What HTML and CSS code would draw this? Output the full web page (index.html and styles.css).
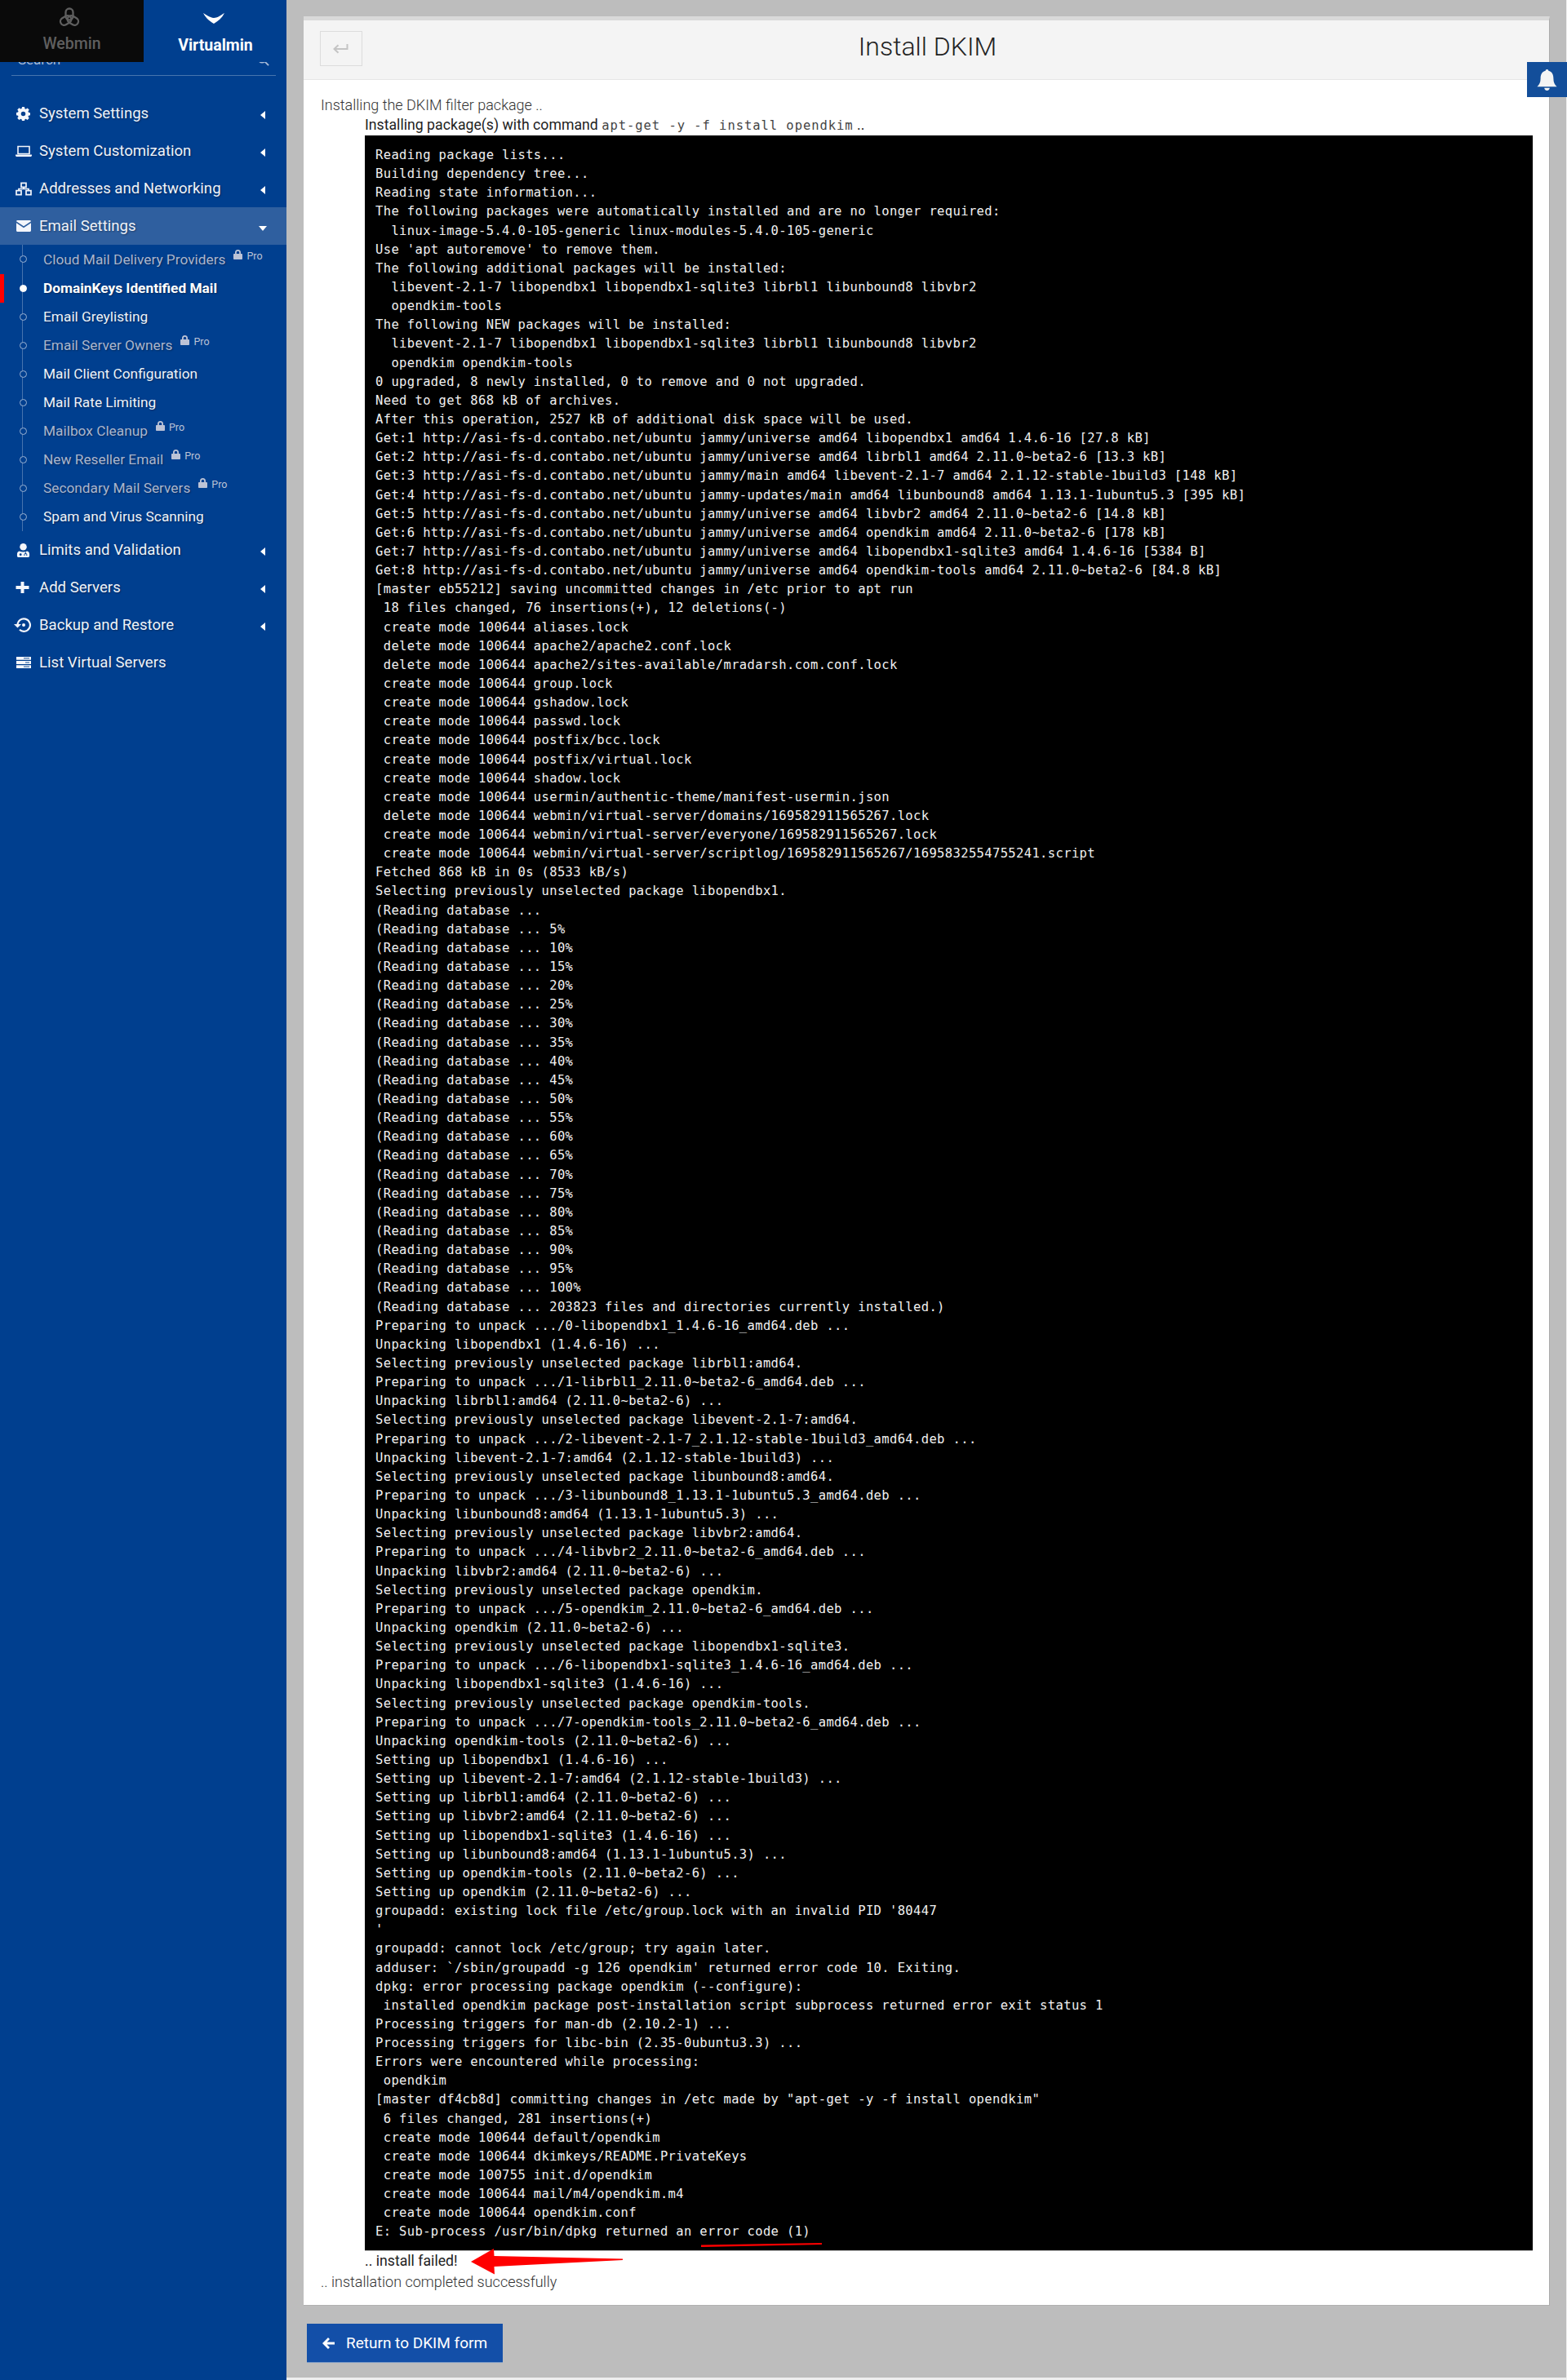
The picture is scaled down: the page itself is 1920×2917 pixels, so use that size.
FILE: index.html
```html
<!DOCTYPE html>
<html lang="en">
<head>
<meta charset="utf-8">
<title>Install DKIM</title>
<link rel="stylesheet" href="styles.css">
</head>
<body>
<div class="page">
<aside class="sidebar">
  <div class="tabs">
    <div class="tab tab-webmin">
      <svg class="tab-icon" viewBox="0 0 26 24"><g fill="none" stroke="currentColor" stroke-width="2.300"><rect x="8.500" y="1.500" width="9" height="14" rx="4.500" transform="rotate(0 13 13.500)"/><rect x="8.500" y="1.500" width="9" height="14" rx="4.500" transform="rotate(120 13 13.500)"/><rect x="8.500" y="1.500" width="9" height="14" rx="4.500" transform="rotate(240 13 13.500)"/></g></svg>
      <span>Webmin</span>
    </div>
    <div class="tab tab-virtualmin">
      <svg class="tab-icon" viewBox="0 0 26 13"><path d="M0 0C5 3 9 6 13 6S21 3 26 0C23 6 18 10 13 13 8 10 3 6 0 0z" fill="currentColor"/></svg>
      <span>Virtualmin</span>
    </div>
  </div>
  <div class="search"><span>Search</span>
    <svg class="search-icon" viewBox="0 0 16 16"><circle cx="6.500" cy="6.500" r="5" fill="none" stroke="currentColor" stroke-width="1.500"/><path d="M10 10l5 5" stroke="currentColor" stroke-width="2"/></svg>
  </div>
  <nav class="menu">
    <div class="row"><svg class="ico" viewBox="0 0 16 16"><path d="M6.600 0h2.800l.4 2.100 1.200.5 1.800-1.200 2 2-1.200 1.800.5 1.200 2 .4v2.800l-2 .4-.5 1.200 1.200 1.800-2 2-1.800-1.200-1.200.5-.4 2H6.600l-.4-2-1.200-.5-1.800 1.200-2-2 1.200-1.800-.5-1.200-2-.4V6.600l2-.4.500-1.200L1.200 3.200l2-2L5 2.400l1.200-.5zM8 5.400a2.600 2.600 0 1 0 0 5.200 2.600 2.600 0 0 0 0-5.200z" fill="currentColor" fill-rule="evenodd"/></svg><span class="label">System Settings</span><i class="caret-left"></i></div>
    <div class="row"><svg class="ico ico-wide" viewBox="0 0 20 14"><path d="M3 1h14v9H3z" fill="none" stroke="currentColor" stroke-width="1.600"/><path d="M0 11h20v1.500l-1 1H1l-1-1z" fill="currentColor"/></svg><span class="label">System Customization</span><i class="caret-left"></i></div>
    <div class="row"><svg class="ico ico-wide" viewBox="0 0 20 16"><path d="M7 .8h6v5H7zM1 10.200h6v5H1zM13 10.200h6v5h-6z" fill="none" stroke="currentColor" stroke-width="1.700"/><path d="M10 5.500v2.500M4 10.500V8h12v2.500" fill="none" stroke="currentColor" stroke-width="1.700"/></svg><span class="label">Addresses and Networking</span><i class="caret-left"></i></div>
    <div class="row row-open"><svg class="ico ico-mail" viewBox="0 0 18 14"><path d="M1.500 0h15c.8 0 1.500.6 1.500 1.300L9 7.300 0 1.300C0 .6.700 0 1.500 0zM0 3.200l9 6 9-6v9.300c0 .8-.7 1.500-1.500 1.500h-15C.7 14 0 13.300 0 12.500z" fill="currentColor"/></svg><span class="label">Email Settings</span><i class="caret-down"></i></div>
    <ul class="sub">
      <li class="item dim"><span>Cloud Mail Delivery Providers</span><span class="pro"><svg class="lock" viewBox="0 0 11 12"><path d="M2 5V3.500a3.500 3.500 0 0 1 7 0V5h1.200c.4 0 .8.400.8.800v5.400c0 .4-.4.800-.8.800H.8c-.4 0-.8-.4-.8-.8V5.800C0 5.400.4 5 .8 5zm1.800 0h3.400V3.500a1.700 1.700 0 0 0-3.400 0z" fill="currentColor"/></svg>Pro</span></li>
      <li class="item active"><span>DomainKeys Identified Mail</span></li>
      <li class="item"><span>Email Greylisting</span></li>
      <li class="item dim"><span>Email Server Owners</span><span class="pro"><svg class="lock" viewBox="0 0 11 12"><path d="M2 5V3.500a3.500 3.500 0 0 1 7 0V5h1.200c.4 0 .8.400.8.800v5.400c0 .4-.4.800-.8.800H.8c-.4 0-.8-.4-.8-.8V5.800C0 5.400.4 5 .8 5zm1.800 0h3.400V3.500a1.700 1.700 0 0 0-3.400 0z" fill="currentColor"/></svg>Pro</span></li>
      <li class="item"><span>Mail Client Configuration</span></li>
      <li class="item"><span>Mail Rate Limiting</span></li>
      <li class="item dim"><span>Mailbox Cleanup</span><span class="pro"><svg class="lock" viewBox="0 0 11 12"><path d="M2 5V3.500a3.500 3.500 0 0 1 7 0V5h1.200c.4 0 .8.400.8.800v5.400c0 .4-.4.800-.8.800H.8c-.4 0-.8-.4-.8-.8V5.800C0 5.400.4 5 .8 5zm1.800 0h3.400V3.500a1.700 1.700 0 0 0-3.400 0z" fill="currentColor"/></svg>Pro</span></li>
      <li class="item dim"><span>New Reseller Email</span><span class="pro"><svg class="lock" viewBox="0 0 11 12"><path d="M2 5V3.500a3.500 3.500 0 0 1 7 0V5h1.200c.4 0 .8.400.8.800v5.400c0 .4-.4.800-.8.800H.8c-.4 0-.8-.4-.8-.8V5.800C0 5.400.4 5 .8 5zm1.800 0h3.400V3.500a1.700 1.700 0 0 0-3.400 0z" fill="currentColor"/></svg>Pro</span></li>
      <li class="item dim"><span>Secondary Mail Servers</span><span class="pro"><svg class="lock" viewBox="0 0 11 12"><path d="M2 5V3.500a3.500 3.500 0 0 1 7 0V5h1.200c.4 0 .8.400.8.800v5.400c0 .4-.4.800-.8.800H.8c-.4 0-.8-.4-.8-.8V5.800C0 5.400.4 5 .8 5zm1.800 0h3.400V3.500a1.700 1.700 0 0 0-3.400 0z" fill="currentColor"/></svg>Pro</span></li>
      <li class="item"><span>Spam and Virus Scanning</span></li>
    </ul>
    <div class="row"><svg class="ico" viewBox="0 0 16 18"><circle cx="8" cy="4.500" r="4.500" fill="currentColor"/><path d="M3 10c3 1.500 7 1.500 10 0 2 .5 3 2 3 4v2.500c0 .8-.7 1.500-1.500 1.500h-13C.7 18 0 17.300 0 16.500V14c0-2 1-3.500 3-4z" fill="currentColor"/><circle cx="4.500" cy="14.500" r="1.500" fill="#003f8f"/><path d="M11 11v3M9.500 16v-1.500a1.500 1.500 0 0 1 3 0V16" stroke="#003f8f" fill="none"/></svg><span class="label">Limits and Validation</span><i class="caret-left"></i></div>
    <div class="row"><svg class="ico ico-plus" viewBox="0 0 16 14"><path d="M6 0h4v5h6v4h-6v5H6V9H0V5h6z" fill="currentColor"/></svg><span class="label">Add Servers</span><i class="caret-left"></i></div>
    <div class="row"><svg class="ico ico-back" viewBox="0 0 21 18"><path d="M4.500 9a7.700 7.700 0 1 1 2.500 5.800" fill="none" stroke="currentColor" stroke-width="2.200"/><path d="M0 8h9l-4.500 4.500z" fill="currentColor"/><circle cx="12" cy="9" r="2" fill="currentColor"/></svg><span class="label">Backup and Restore</span><i class="caret-left"></i></div>
    <div class="row"><svg class="ico ico-mail" viewBox="0 0 18 14"><path d="M0 0h18v3.700H0zM0 5.100h18v3.800H0zM0 10.300h18V14H0z" fill="currentColor"/><path d="M9 1.800h7M11 7h5M9 12.100h7" stroke="#003f8f" stroke-width=".9"/></svg><span class="label">List Virtual Servers</span></div>
  </nav>
  <i class="marker"></i>
</aside>
<main class="main">
  <section class="card">
    <header class="card-head">
      <button class="back" type="button"><svg viewBox="0 0 20 12"><path d="M18.500 0v6H3M7.500 1.200L2.500 6l5 4.800" fill="none" stroke="currentColor" stroke-width="2"/></svg></button>
      <h1>Install DKIM</h1>
      <span class="back-spacer"></span>
    </header>
    <div class="card-body">
      <p class="line">Installing the DKIM filter package ..</p>
      <div class="indent">
        <p class="line line-strong">Installing package(s) with command <code>apt-get -y -f install opendkim</code> ..</p>
<pre class="term">Reading package lists...
Building dependency tree...
Reading state information...
The following packages were automatically installed and are no longer required:
  linux-image-5.4.0-105-generic linux-modules-5.4.0-105-generic
Use 'apt autoremove' to remove them.
The following additional packages will be installed:
  libevent-2.1-7 libopendbx1 libopendbx1-sqlite3 librbl1 libunbound8 libvbr2
  opendkim-tools
The following NEW packages will be installed:
  libevent-2.1-7 libopendbx1 libopendbx1-sqlite3 librbl1 libunbound8 libvbr2
  opendkim opendkim-tools
0 upgraded, 8 newly installed, 0 to remove and 0 not upgraded.
Need to get 868 kB of archives.
After this operation, 2527 kB of additional disk space will be used.
Get:1 http://asi-fs-d.contabo.net/ubuntu jammy/universe amd64 libopendbx1 amd64 1.4.6-16 [27.8 kB]
Get:2 http://asi-fs-d.contabo.net/ubuntu jammy/universe amd64 librbl1 amd64 2.11.0~beta2-6 [13.3 kB]
Get:3 http://asi-fs-d.contabo.net/ubuntu jammy/main amd64 libevent-2.1-7 amd64 2.1.12-stable-1build3 [148 kB]
Get:4 http://asi-fs-d.contabo.net/ubuntu jammy-updates/main amd64 libunbound8 amd64 1.13.1-1ubuntu5.3 [395 kB]
Get:5 http://asi-fs-d.contabo.net/ubuntu jammy/universe amd64 libvbr2 amd64 2.11.0~beta2-6 [14.8 kB]
Get:6 http://asi-fs-d.contabo.net/ubuntu jammy/universe amd64 opendkim amd64 2.11.0~beta2-6 [178 kB]
Get:7 http://asi-fs-d.contabo.net/ubuntu jammy/universe amd64 libopendbx1-sqlite3 amd64 1.4.6-16 [5384 B]
Get:8 http://asi-fs-d.contabo.net/ubuntu jammy/universe amd64 opendkim-tools amd64 2.11.0~beta2-6 [84.8 kB]
[master eb55212] saving uncommitted changes in /etc prior to apt run
 18 files changed, 76 insertions(+), 12 deletions(-)
 create mode 100644 aliases.lock
 delete mode 100644 apache2/apache2.conf.lock
 delete mode 100644 apache2/sites-available/mradarsh.com.conf.lock
 create mode 100644 group.lock
 create mode 100644 gshadow.lock
 create mode 100644 passwd.lock
 create mode 100644 postfix/bcc.lock
 create mode 100644 postfix/virtual.lock
 create mode 100644 shadow.lock
 create mode 100644 usermin/authentic-theme/manifest-usermin.json
 delete mode 100644 webmin/virtual-server/domains/169582911565267.lock
 create mode 100644 webmin/virtual-server/everyone/169582911565267.lock
 create mode 100644 webmin/virtual-server/scriptlog/169582911565267/1695832554755241.script
Fetched 868 kB in 0s (8533 kB/s)
Selecting previously unselected package libopendbx1.
(Reading database ...
(Reading database ... 5%
(Reading database ... 10%
(Reading database ... 15%
(Reading database ... 20%
(Reading database ... 25%
(Reading database ... 30%
(Reading database ... 35%
(Reading database ... 40%
(Reading database ... 45%
(Reading database ... 50%
(Reading database ... 55%
(Reading database ... 60%
(Reading database ... 65%
(Reading database ... 70%
(Reading database ... 75%
(Reading database ... 80%
(Reading database ... 85%
(Reading database ... 90%
(Reading database ... 95%
(Reading database ... 100%
(Reading database ... 203823 files and directories currently installed.)
Preparing to unpack .../0-libopendbx1_1.4.6-16_amd64.deb ...
Unpacking libopendbx1 (1.4.6-16) ...
Selecting previously unselected package librbl1:amd64.
Preparing to unpack .../1-librbl1_2.11.0~beta2-6_amd64.deb ...
Unpacking librbl1:amd64 (2.11.0~beta2-6) ...
Selecting previously unselected package libevent-2.1-7:amd64.
Preparing to unpack .../2-libevent-2.1-7_2.1.12-stable-1build3_amd64.deb ...
Unpacking libevent-2.1-7:amd64 (2.1.12-stable-1build3) ...
Selecting previously unselected package libunbound8:amd64.
Preparing to unpack .../3-libunbound8_1.13.1-1ubuntu5.3_amd64.deb ...
Unpacking libunbound8:amd64 (1.13.1-1ubuntu5.3) ...
Selecting previously unselected package libvbr2:amd64.
Preparing to unpack .../4-libvbr2_2.11.0~beta2-6_amd64.deb ...
Unpacking libvbr2:amd64 (2.11.0~beta2-6) ...
Selecting previously unselected package opendkim.
Preparing to unpack .../5-opendkim_2.11.0~beta2-6_amd64.deb ...
Unpacking opendkim (2.11.0~beta2-6) ...
Selecting previously unselected package libopendbx1-sqlite3.
Preparing to unpack .../6-libopendbx1-sqlite3_1.4.6-16_amd64.deb ...
Unpacking libopendbx1-sqlite3 (1.4.6-16) ...
Selecting previously unselected package opendkim-tools.
Preparing to unpack .../7-opendkim-tools_2.11.0~beta2-6_amd64.deb ...
Unpacking opendkim-tools (2.11.0~beta2-6) ...
Setting up libopendbx1 (1.4.6-16) ...
Setting up libevent-2.1-7:amd64 (2.1.12-stable-1build3) ...
Setting up librbl1:amd64 (2.11.0~beta2-6) ...
Setting up libvbr2:amd64 (2.11.0~beta2-6) ...
Setting up libopendbx1-sqlite3 (1.4.6-16) ...
Setting up libunbound8:amd64 (1.13.1-1ubuntu5.3) ...
Setting up opendkim-tools (2.11.0~beta2-6) ...
Setting up opendkim (2.11.0~beta2-6) ...
groupadd: existing lock file /etc/group.lock with an invalid PID '80447
'
groupadd: cannot lock /etc/group; try again later.
adduser: `/sbin/groupadd -g 126 opendkim' returned error code 10. Exiting.
dpkg: error processing package opendkim (--configure):
 installed opendkim package post-installation script subprocess returned error exit status 1
Processing triggers for man-db (2.10.2-1) ...
Processing triggers for libc-bin (2.35-0ubuntu3.3) ...
Errors were encountered while processing:
 opendkim
[master df4cb8d] committing changes in /etc made by "apt-get -y -f install opendkim"
 6 files changed, 281 insertions(+)
 create mode 100644 default/opendkim
 create mode 100644 dkimkeys/README.PrivateKeys
 create mode 100755 init.d/opendkim
 create mode 100644 mail/m4/opendkim.m4
 create mode 100644 opendkim.conf
E: Sub-process /usr/bin/dpkg returned an error code (1)</pre>
        <p class="line line-strong">.. install failed!</p>
      </div>
      <p class="line">.. installation completed successfully</p>
    </div>
  </section>
  <button class="return" type="button"><svg viewBox="0 0 16 16"><path d="M8 1l2 2-3.500 3.500H16v3H6.500L10 13l-2 2-7-7z" fill="currentColor"/></svg>Return to DKIM form</button>
  <div class="bell"><svg viewBox="0 0 26 28"><path d="M13 0c1.300 0 2 .9 2 2 4.500 1 6.500 5 6.500 10 0 5 1.500 8 4.500 11H0c3-3 4.500-6 4.500-11 0-5 2-9 6.500-10 0-1.100.7-2 2-2zM9.500 24.500h7c0 2-1.500 3.500-3.500 3.500s-3.500-1.500-3.500-3.500z" fill="currentColor"/></svg></div>
  <svg class="annot" viewBox="0 0 1920 2917"><path d="M859 2751.500l148-2.500v2l-148 3z" fill="#f00"/><path d="M577 2772l28-16 .5 9 157.500 3.500v1.500l-157.500 8 .5 9.500z" fill="#f00"/></svg>
</main>
</div>
</body>
</html>
```
FILE: styles.css
```css
* { box-sizing: border-box; }
html, body { margin: 0; padding: 0; background: #efefef; }
body { font-family: Roboto, "Liberation Sans", sans-serif; color: #333; }
.page { display: flex; width: 1920px; height: 2917px; }

.sidebar { position: relative; width: 351px; flex: none; background: #003f8f; color: #fff; }
.tabs { position: absolute; left: 0; top: 0; width: 100%; height: 76px; display: flex; z-index: 2; background: #003f8f; }
.tab { width: 176px; display: flex; flex-direction: column; align-items: center; font-size: 19.500px; font-weight: 500; }
.tab-webmin { background: #0a0a0a; color: #5f5f5f; padding-top: 9px; }
.tab-webmin .tab-icon { width: 26px; height: 24px; margin-bottom: 9px; margin-left: -6px; }
.tab-virtualmin { flex: 1; padding-top: 16px; font-weight: 700; padding-left: 1px; }
.tab-virtualmin .tab-icon { width: 26px; height: 13px; margin-bottom: 15px; margin-left: -5px; }

.search { margin: 0 13px 0 14px; height: 93px; padding: 63px 8px 0 8px; border-bottom: 1px solid rgba(255,255,255,.28); display: flex; justify-content: space-between; color: #a9bcd8; font-size: 17px; }
.search-icon { width: 15px; height: 15px; margin-top: 3px; }

.menu { padding-top: 23px; }
.row { height: 46px; display: flex; align-items: center; padding-left: 20px; font-size: 18.600px; color: #eef2f9; text-shadow: 1px 1px 2px rgba(0,0,0,.35); }
.row-open { background: #2f5f9f; }
.ico { width: 17px; height: 17px; flex: none; margin-right: 11px; color: #f4f6fb; }
.ico-wide { width: 20px; margin-left: -1px; margin-right: 9px; }
.ico-mail { width: 18px; height: 14px; margin-right: 10px; }
.ico-plus { height: 14px; margin-left: -1px; margin-right: 12px; }
.ico-back { width: 21px; height: 18px; margin-left: -3px; margin-right: 10px; }
.label { flex: 1; }
.caret-left { width: 0; height: 0; margin-right: 26px; margin-top: 4px; border: 5px solid transparent; border-left-width: 0; border-right: 6px solid #fff; }
.caret-down { width: 0; height: 0; margin-right: 24px; margin-top: 5px; border: 5px solid transparent; border-bottom-width: 0; border-top: 6px solid #fff; }

.sub { list-style: none; margin: 0; padding: 0; height: 351px; position: relative; }
.sub::before { content: ""; position: absolute; left: 27px; top: 0; bottom: 0; width: 1px; background: rgba(255,255,255,.28); }
.item { position: relative; height: 35px; display: flex; align-items: center; padding-left: 53px; font-size: 17.300px; color: #eef2f9; text-shadow: 1px 1px 2px rgba(0,0,0,.35); }
.item::before { content: ""; position: absolute; left: 24px; top: 14px; width: 7px; height: 7px; border-radius: 50%; border: 1px solid #9db3d3; background: #003f8f; }
.item:first-child::before { top: 13px; }
.item.dim { color: #aab5cd; }
.item.active { font-weight: 700; color: #fff; }
.item.active::before { background: #fff; border-color: #fff; }
.pro { display: inline-flex; align-items: flex-start; margin-left: 10px; margin-top: -9px; font-size: 12.500px; color: #bcc3d6; text-shadow: none; }
.lock { width: 11px; height: 12px; margin-right: 5px; }
.marker { position: absolute; left: 0; top: 336px; width: 5px; height: 35px; background: #f00; }

.main { position: relative; flex: 1; height: 2914px; margin-right: 1px; background: #bdbdbd; padding: 20px 20px 0 21px; }
.card { background: #fff; border-top: 5px solid #d9d9d9; height: 2806px; border-right: 1px solid #ababab; border-bottom: 1px solid #b0b0b0; }
.card-head { height: 73px; background: #f4f4f4; border-bottom: 1px solid #e6e6e6; display: flex; align-items: flex-start; justify-content: space-between; padding: 13px 20px 0; }
.back { width: 52px; height: 43px; padding: 0 0 0 14px; margin: 0; display: flex; align-items: center; background: transparent; border: 1px solid #dcdcdc; color: #c4c4c4; }
.back svg { width: 20px; height: 12px; }
.back-spacer { width: 52px; }
.card-head h1 { margin: 0 0 0 3px; font-size: 32px; line-height: 38px; font-weight: 300; color: #222; }
.card-body { padding: 18px 20px 0 21px; }
.line { margin: 0; height: 25px; line-height: 25px; font-size: 18px; color: #333; font-weight: 300; }
.line-strong { font-size: 17.700px; font-weight: 400; color: #222; }
.indent { padding-left: 54px; }
.line code { font-family: "DejaVu Sans Mono", monospace; font-size: 15.500px; letter-spacing: .95px; color: #444; }
.term { margin: 0; height: 2593px; padding: 13px 13px 12px; background: #000; color: #f0f0f0; font-family: "DejaVu Sans Mono", monospace; font-size: 15.500px; letter-spacing: .36px; line-height: 23.140px; overflow: hidden; border-bottom: 1px solid #bbb; }

.return { display: flex; align-items: center; margin: 22px 0 0 4px; width: 240px; height: 48px; padding: 0 0 0 18px; background: #134fa8; color: #fff; border: 0; border-bottom: 1px solid #7f9cc7; font-family: inherit; font-size: 19px; }
.return svg { width: 16px; height: 16px; margin-right: 14px; }
.bell { position: absolute; right: -1px; top: 76px; width: 49px; height: 43px; background: #134e9a; color: #f4f4f4; display: flex; align-items: center; justify-content: center; }
.bell svg { width: 25px; height: 26px; }
.annot { position: absolute; left: -351px; top: 0; width: 1920px; height: 2917px; pointer-events: none; }
```
